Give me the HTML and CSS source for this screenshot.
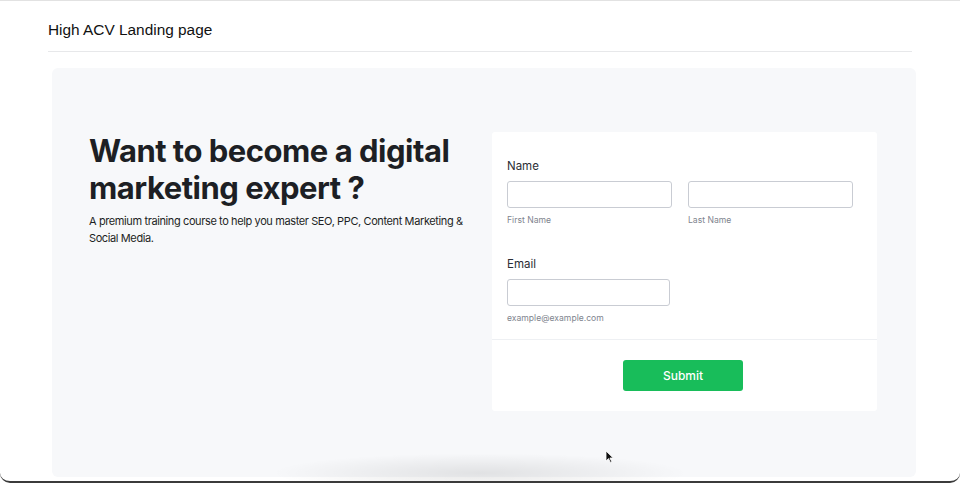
FILE: index.html
```html
<!DOCTYPE html>
<html lang="en">
<head>
    <meta charset="UTF-8">
    <meta name="viewport" content="width=device-width, initial-scale=1.0">
    <title>High ACV Landing page</title>
    <link rel="stylesheet" href="styles.css">
</head>
<body>

    <div class="frame">
        <header class="top">
            <h1>High ACV Landing page</h1>
        </header>

        <section class="panel">
            <div class="intro">
                <h2>Want to become a digital marketing expert ?</h2>
                <p>A premium training course to help you master SEO, PPC, Content Marketing &amp; Social Media.</p>
            </div>

            <form class="card" onsubmit="return false">
                <div class="fields">
                    <div class="field">
                        <label class="label">Name</label>
                        <div class="pair">
                            <div class="sub">
                                <input type="text">
                                <span class="hint">First Name</span>
                            </div>
                            <div class="sub">
                                <input type="text">
                                <span class="hint">Last Name</span>
                            </div>
                        </div>
                    </div>

                    <div class="field">
                        <label class="label">Email</label>
                        <div class="sub email">
                            <input type="email">
                            <span class="hint">example@example.com</span>
                        </div>
                    </div>
                </div>

                <div class="actions">
                    <button type="submit" class="submit">Submit</button>
                </div>
            </form>
        </section>

        <!-- soft shadow left over from the recording -->
        <div class="glow"></div>

        <svg class="cursor" width="9" height="13" viewBox="0 0 9 13">
            <path d="M1 1 L1 11 L3.5 8.6 L5.4 12.4 L6.8 11.7 L4.9 8 L8.2 8 Z" fill="#111" stroke="#fff" stroke-width="0.8"/>
        </svg>
    </div>

</body>
</html>
```

FILE: styles.css
```css
body {
    margin: 0;
    background-color: #fff;
    font-family: 'Inter', 'Liberation Sans', sans-serif;
    color: #1f2126;
}

.frame {
    position: relative;
    height: 483px;
    box-sizing: border-box;
    overflow: hidden;
    border-top: 1px solid #e2e2e2;
    border-bottom: 2px solid #3b3b3b;
    border-radius: 0 0 10px 10px;
}

.top {
    margin: 0 48px;
    height: 50px;
    border-bottom: 1px solid #e7e8ea;
    display: flex;
    align-items: center;
}

.top h1 {
    margin: 0;
    font-family: 'Liberation Sans', Arial, sans-serif;
    font-size: 15.4px;
    font-weight: normal;
    color: #111;
    padding-top: 8px;
}

.panel {
    margin: 16px 44px 0 52px;
    height: 409px;
    background-color: #f7f8fa;
    border-radius: 6px;
    padding: 64px 39px 0 37px;
    box-sizing: border-box;
    display: flex;
    justify-content: space-between;
    align-items: flex-start;
}

.intro {
    width: 384px;
}

.intro h2 {
    margin: 0;
    font-size: 31px;
    line-height: 37px;
    font-weight: 700;
    letter-spacing: -0.5px;
    color: #1d1f24;
}

.intro p {
    margin: 7px 0 0;
    font-size: 11px;
    line-height: 17px;
    letter-spacing: -0.39px;
    color: #1d1f24;
}

/* Form card */
.card {
    width: 385px;
    background-color: #fff;
    border-radius: 3px;
}

.fields {
    padding: 24px 16px 15px 15px;
    border-bottom: 1px solid #eef0f3;
}

.field + .field {
    margin-top: 28px;
}

.label {
    display: block;
    font-size: 11.5px;
    line-height: 20px;
    font-weight: 400;
    color: #2b2e35;
    margin-bottom: 5px;
}

.pair {
    display: flex;
    gap: 16px;
}

.sub {
    display: flex;
    flex-direction: column;
    width: 165px;
}

.sub.email {
    width: 163px;
}

.sub input {
    height: 27px;
    box-sizing: border-box;
    margin: 0;
    border: 1px solid #c9ccd3;
    border-radius: 3px;
    background: #fff;
    outline: none;
}

.hint {
    margin-top: 7px;
    font-size: 8.6px;
    line-height: 11px;
    color: #80848e;
}

.actions {
    display: flex;
    justify-content: center;
    padding: 20px 3px 20px 0;
}

.submit {
    width: 120px;
    height: 31px;
    border: none;
    border-radius: 3px;
    background-color: #18bd5a;
    color: #fff;
    font-family: 'Inter', sans-serif;
    font-size: 12px;
    font-weight: 500;
    cursor: pointer;
}

.glow {
    position: absolute;
    left: 270px;
    top: 452px;
    width: 420px;
    height: 40px;
    background: radial-gradient(ellipse at center, rgba(0, 0, 0, 0.09) 0%, rgba(0, 0, 0, 0) 70%);
    pointer-events: none;
}

.cursor {
    position: absolute;
    left: 605px;
    top: 449px;
}
```
